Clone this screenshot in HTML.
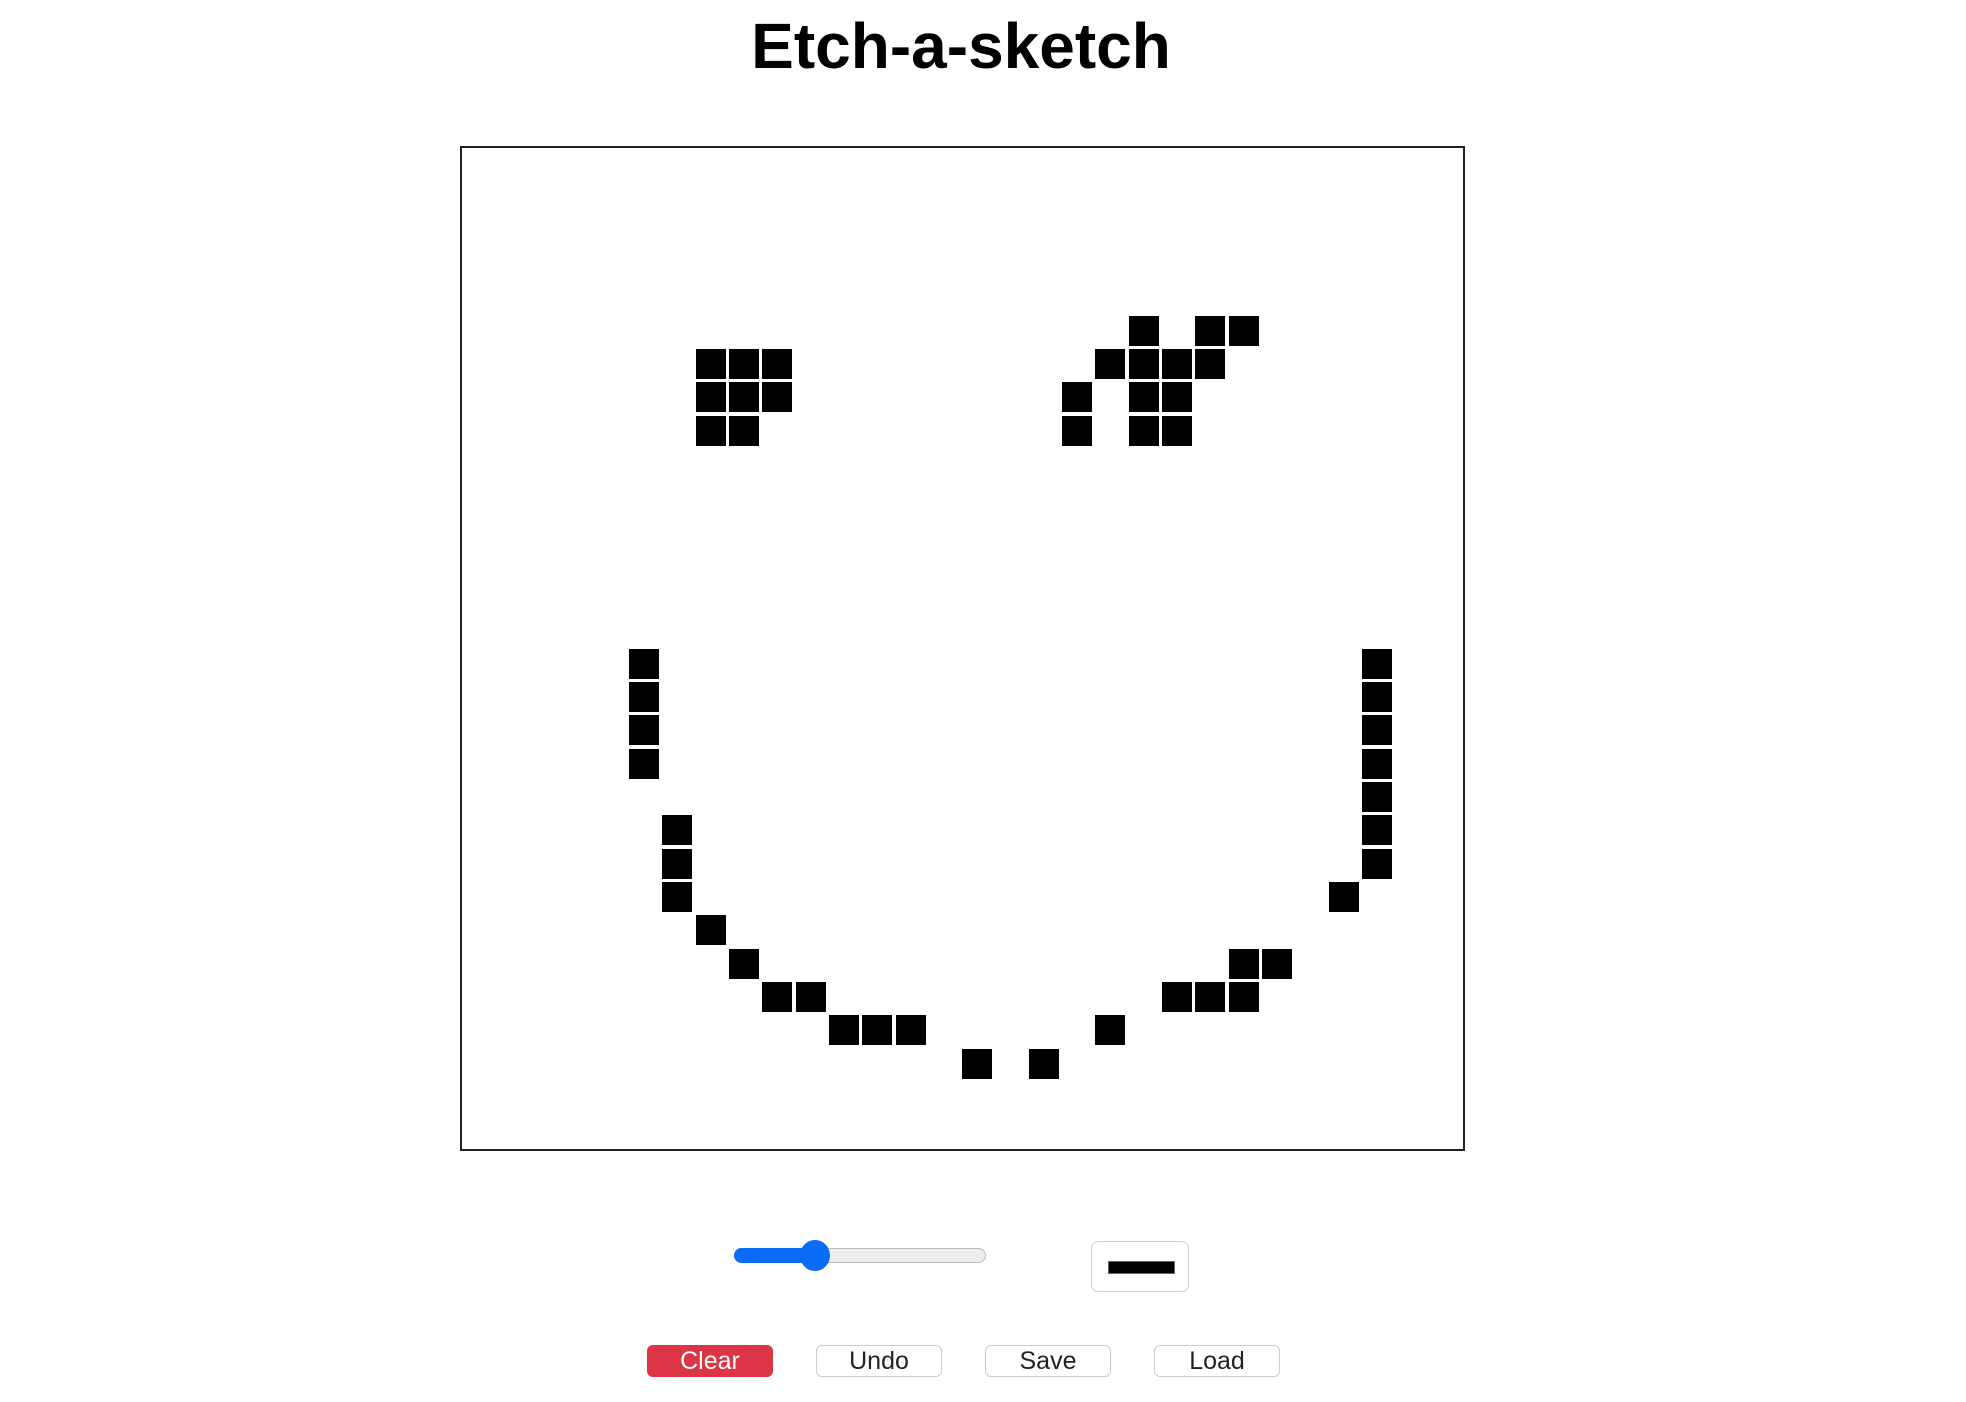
<!DOCTYPE html>
<html><head><style>
body{margin:0;width:1966px;height:1402px;background:#fff;position:relative;overflow:hidden;font-family:"Liberation Sans",sans-serif}
h1{position:absolute;left:0;width:1922px;top:9px;margin:0;text-align:center;font-size:64px;font-weight:bold;color:#000}
#cv{position:absolute;left:460px;top:146px;width:1001px;height:1001px;border:2px solid #222}
.c{position:absolute;width:30px;height:30px;background:#000}
.track{position:absolute;left:734px;top:1248px;width:252px;height:15px;border-radius:8px;background:#eee;border:1px solid #bbb;box-sizing:border-box}
.fill{position:absolute;left:734px;top:1248px;width:82px;height:15px;border-radius:8px;background:#0a6cf5}
.thumb{position:absolute;left:800px;top:1240px;width:30px;height:31px;border-radius:50%;background:#0a6cf5}
.color{position:absolute;left:1091px;top:1241px;width:98px;height:51px;border:1px solid #ccc;border-radius:7px;box-sizing:border-box;background:#fff}
.color div{position:absolute;left:16px;top:19px;width:65px;height:11px;background:#000;border:1px solid #666}
.b{position:absolute;top:1345px;height:32px;width:126px;border:1px solid #ccc;border-radius:6px;box-sizing:border-box;background:#fff;color:#222;font-size:25px;line-height:30px;text-align:center}
</style></head><body>
<h1>Etch-a-sketch</h1>
<div id="cv"></div>
<div class="track"></div><div class="fill"></div><div class="thumb"></div>
<div class="color"><div></div></div>
<div class="b" style="left:647px;background:#dc3545;border-color:#dc3545;color:#fff">Clear</div>
<div class="b" style="left:816px">Undo</div>
<div class="b" style="left:985px">Save</div>
<div class="b" style="left:1154px">Load</div>
<script>
var cells=[[6,7],[6,8],[6,9],[7,7],[7,8],[7,9],[8,7],[8,8],
[5,20],[5,22],[5,23],[6,19],[6,20],[6,21],[6,22],[7,18],[7,20],[7,21],[8,18],[8,20],[8,21],
[15,5],[16,5],[17,5],[18,5],[20,6],[21,6],[22,6],[23,7],[24,8],[25,9],[25,10],[26,11],[26,12],[26,13],
[27,15],[27,17],[26,19],[25,21],[25,22],[25,23],[24,23],[24,24],[22,26],
[15,27],[16,27],[17,27],[18,27],[19,27],[20,27],[21,27]];
var h='';cells.forEach(function(p){h+='<div class="c" style="left:'+(462.4+p[1]*33.32)+'px;top:'+(149+p[0]*33.32)+'px"></div>';});
document.body.insertAdjacentHTML('beforeend',h);
</script>
</body></html>
